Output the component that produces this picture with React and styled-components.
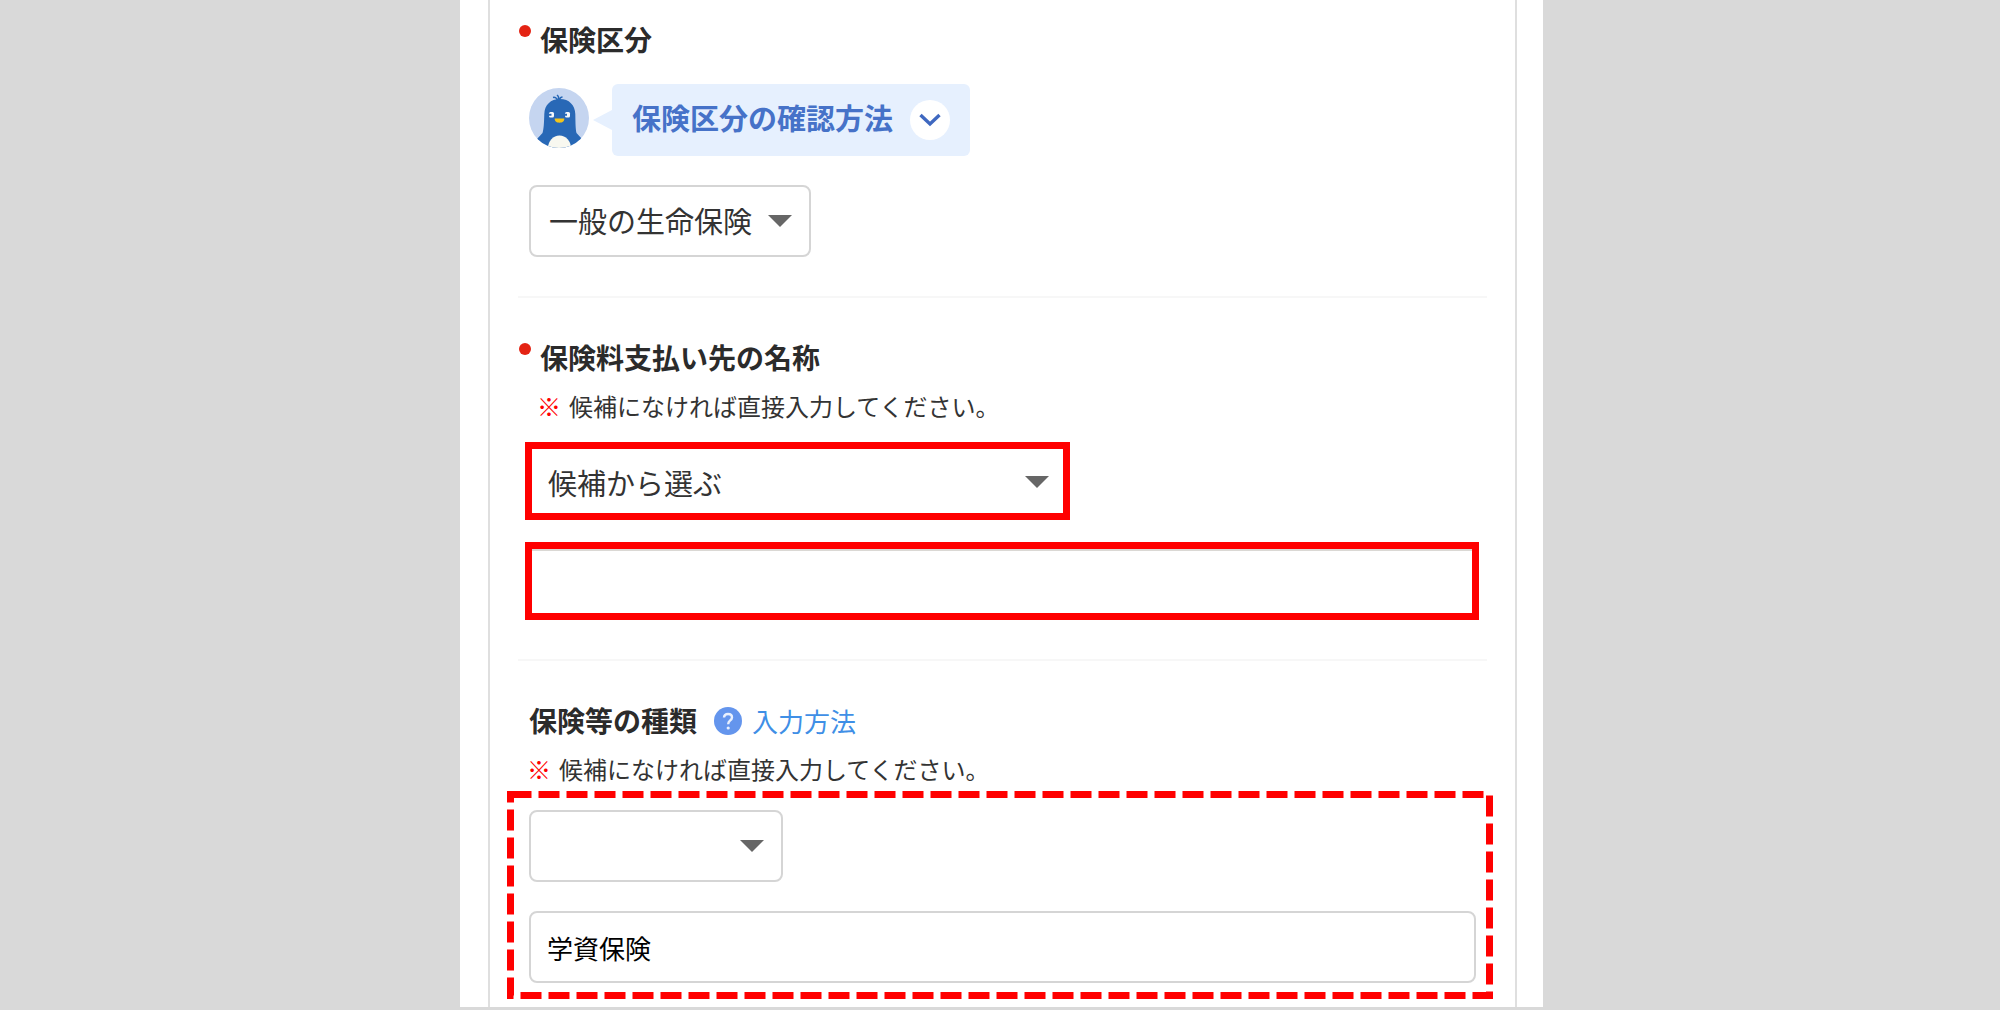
import { useState } from 'react';
import styled, { createGlobalStyle } from 'styled-components';

const GlobalStyle = createGlobalStyle`
  *, *::before, *::after {
    box-sizing: border-box;
  }

  body {
    margin: 0;
    background-color: #d9d9d9;
    color: #2b2b2b;
    font-family: 'Noto Sans CJK JP', 'Noto Sans', sans-serif;
  }

  button, input, select {
    margin: 0;
    font-family: inherit;
  }
`;

const Page = styled.div`
  display: grid;
  grid-template-columns: 460fr 1083fr 457fr;

  @media screen and (max-width: 1200px) {
    grid-template-columns: 0 1fr 0;
  }
`;

const Sheet = styled.main`
  grid-column: 2;
  padding: 0 26px 0 28px;
  background-color: #fff;
`;

const Panel = styled.form`
  padding: 0 28px 8px;
  border: solid #dfdfdf;
  border-width: 0 2px;
`;

const Section = styled.section`
  display: flex;
  flex-direction: column;
  align-items: flex-start;
  padding: ${props => props.$first ? '20px' : '40px'} 11px ${props => props.$last ? '0' : '39px'} 11px;
  border-bottom: ${props => props.$last ? 'none' : '2px solid #f7f7f7'};
`;

const TitleRow = styled.div`
  display: flex;
  align-items: center;
  margin-left: ${props => props.$required ? '-10px' : '0'};
`;

const RequiredDot = styled.span`
  width: 12px;
  height: 12px;
  margin: 0 9px 18px 0;
  border-radius: 50%;
  background-color: #e42313;
`;

const Title = styled.label`
  padding-bottom: 2px;
  font-size: 28px;
  line-height: 38px;
  font-weight: 700;
`;

const HelpLink = styled.a`
  display: flex;
  align-items: center;
  gap: 10px;
  margin-left: 17px;
  color: #3f8fe6;
  font-size: 26px;
  line-height: 40px;
  text-decoration: none;
`;

const Note = styled.p`
  display: flex;
  gap: 8px;
  margin: 12px 0 0 ${props => props.$indent ? '8px' : '-2px'};
  color: #333;
  font-size: 24px;
  line-height: 32px;
`;

const NoteMark = styled.span`
  color: #f00;
  font-weight: 700;
`;

const Guide = styled.div`
  display: flex;
  align-items: center;
  margin: 24px 0 29px;
`;

const GuideButton = styled.button`
  display: flex;
  align-items: center;
  gap: 17px;
  height: 72px;
  padding: 0 20px;
  border: none;
  border-radius: 6px;
  background-color: #e6f0fe;
  color: #4672c8;
  font-size: 29px;
  font-weight: 700;
  cursor: pointer;
`;

const GuideText = styled.span`
  padding-bottom: 6px;
`;

const SelectBox = styled.div`
  display: grid;
  align-items: center;
  width: ${props => props.$width};
  max-width: 100%;

  > * {
    grid-area: 1 / 1;
  }
`;

const SelectControl = styled.select`
  appearance: none;
  width: 100%;
  height: 72px;
  padding: 0 18px 2px;
  border: 2px solid #d5d5d5;
  border-radius: 8px;
  background-color: #fff;
  color: #333;
  font-size: 29px;
`;

const Caret = styled.svg`
  justify-self: end;
  margin-right: 19px;
  pointer-events: none;
`;

const TextInput = styled.input`
  width: 100%;
  height: 72px;
  padding: 0 16px;
  border: 2px solid #d5d5d5;
  border-radius: 8px;
  background-color: #fff;
  color: #000;
  font-size: 26px;
`;

// red frame round the fields that have to be filled in
const Marked = styled.div`
  align-self: ${props => props.$fill ? 'stretch' : 'flex-start'};
  width: ${props => props.$fill ? 'auto' : '545px'};
  margin: ${props => props.$fill ? '22px' : '20px'} -3px 0 -4px;
  border: 7px solid #f00;

  ${SelectControl}, ${TextInput} {
    height: 64px;
    border: none;
    border-radius: 0;
  }

  ${SelectControl} {
    padding: 2px 16px 0;
  }

  ${Caret} {
    margin: 2px 14px 0 0;
  }

  ${TextInput} {
    display: block;
    box-shadow: inset 0 2px #dad8d4;
  }
`;

const Candidates = styled.div`
  position: relative;
  align-self: stretch;
  display: flex;
  flex-direction: column;
  gap: 29px;
  margin: 6px -17px 0 -22px;
  padding: 19px 17px 16px 22px;
`;

const DashedFrame = styled.svg`
  position: absolute;
  inset: 0;
  width: 100%;
  height: 100%;
  pointer-events: none;

  rect {
    width: calc(100% - 7px);
    height: calc(100% - 7px);
  }
`;

const Penguin = () => (
  <svg width='60' height='64' viewBox='0 0 60 64' aria-hidden='true'>
    <clipPath id='avatar'>
      <circle cx='30' cy='30' r='30' />
    </clipPath>
    <g clipPath='url(#avatar)'>
      <rect width='60' height='60' fill='#c5d5f0' />
      <path d='M31 11C21.500 11 15.600 17 15.300 26C15 35 14.800 41 13.500 45L8 51L18 62H43L53 51L47.500 45C46.500 41 46.500 35 46.300 26C46 17 40 11 31 11Z' fill='#2868b6' />
      <path d='M28.500 12.500C28 10 26 9 24 9.500M29.500 11.500C30 9.500 29.500 8 28 7M30.500 11.500C31 10 32 9 33.500 9' fill='none' stroke='#2868b6' strokeWidth='1.500' />
      <ellipse cx='30.500' cy='60' rx='11.500' ry='12.500' fill='#f8f8f0' />
      <rect x='20' y='24' width='5' height='5.500' rx='1.500' fill='#f4f8fc' />
      <rect x='36' y='24' width='5' height='5.500' rx='1.500' fill='#f4f8fc' />
      <path d='M19.500 26.700H22.500M35.500 26.700H38' stroke='#2868b6' strokeWidth='2' />
      <path d='M25.700 30.500H35.300C35.300 33 34 34.700 30.500 34.700C27 34.700 25.700 33 25.700 30.500Z' fill='#f3c51b' />
    </g>
  </svg>
);

const Pointer = () => (
  <svg width='23' height='20' viewBox='0 0 23 20' aria-hidden='true'>
    <path d='M4 10L23 0V20Z' fill='#e6f0fe' />
  </svg>
);

const Chevron = () => (
  <svg width='40' height='40' viewBox='0 0 40 40' aria-hidden='true'>
    <circle cx='20' cy='20' r='20' fill='#fff' />
    <path d='M10.500 15L20 24L29.500 15' fill='none' stroke='#3f68c0' strokeWidth='3.400' />
  </svg>
);

const QuestionIcon = () => (
  <svg width='28' height='28' viewBox='0 0 28 28' aria-hidden='true'>
    <circle cx='14' cy='14' r='14' fill='#6495ed' />
    <path d='M10 10.500C10.200 8.200 11.800 7 14 7C16.400 7 18 8.400 18 10.400C18 12 17 12.800 15.900 13.700C14.700 14.600 14.200 15.300 14.200 17.200' fill='none' stroke='#e9f0fd' strokeWidth='2.400' />
    <circle cx='14.200' cy='21' r='1.600' fill='#e9f0fd' />
  </svg>
);

const Select = ({ id, width, options, label }) => (
  <SelectBox $width={width}>
    <SelectControl id={id} aria-label={label}>
      {options.map(option => <option key={option}>{option}</option>)}
    </SelectControl>
    <Caret width='24' height='12' viewBox='0 0 24 12' aria-hidden='true'>
      <path d='M0 0H24L12 12Z' fill='#666' />
    </Caret>
  </SelectBox>
);

const CandidateNote = ({ indent }) => (
  <Note $indent={indent}>
    <NoteMark>※</NoteMark>
    <span>候補になければ直接入力してください。</span>
  </Note>
);

const App = () => {
  // payee typed by hand
  const [payee, setPayee] = useState('');
  // kind of insurance typed by hand
  const [kind, setKind] = useState('学資保険');

  return (
    <>
      <GlobalStyle />
      <Page>
        <Sheet>
          <Panel>
            <Section $first>
              <TitleRow $required>
                <RequiredDot />
                <Title htmlFor='category'>保険区分</Title>
              </TitleRow>
              <Guide>
                <Penguin />
                <Pointer />
                <GuideButton type='button'>
                  <GuideText>保険区分の確認方法</GuideText>
                  <Chevron />
                </GuideButton>
              </Guide>
              <Select id='category' width='282px' options={['一般の生命保険']} />
            </Section>

            <Section>
              <TitleRow $required>
                <RequiredDot />
                <Title htmlFor='payee'>保険料支払い先の名称</Title>
              </TitleRow>
              <CandidateNote indent />
              <Marked>
                <Select width='100%' options={['候補から選ぶ']} label='保険料支払い先の候補' />
              </Marked>
              <Marked $fill>
                <TextInput
                  id='payee'
                  type='text'
                  value={payee}
                  onChange={(e) => setPayee(e.target.value)}
                />
              </Marked>
            </Section>

            <Section $last>
              <TitleRow>
                <Title htmlFor='kind'>保険等の種類</Title>
                <HelpLink href='#help'>
                  <QuestionIcon />
                  入力方法
                </HelpLink>
              </TitleRow>
              <CandidateNote />
              <Candidates>
                <Select width='254px' options={['']} label='保険等の種類の候補' />
                <TextInput
                  id='kind'
                  type='text'
                  value={kind}
                  onChange={(e) => setKind(e.target.value)}
                />
                <DashedFrame aria-hidden='true'>
                  <rect x='3.5' y='3.5' fill='none' stroke='#f00' strokeWidth='7' strokeDasharray='21 7' />
                </DashedFrame>
              </Candidates>
            </Section>
          </Panel>
        </Sheet>
      </Page>
    </>
  );
};

export default App;
